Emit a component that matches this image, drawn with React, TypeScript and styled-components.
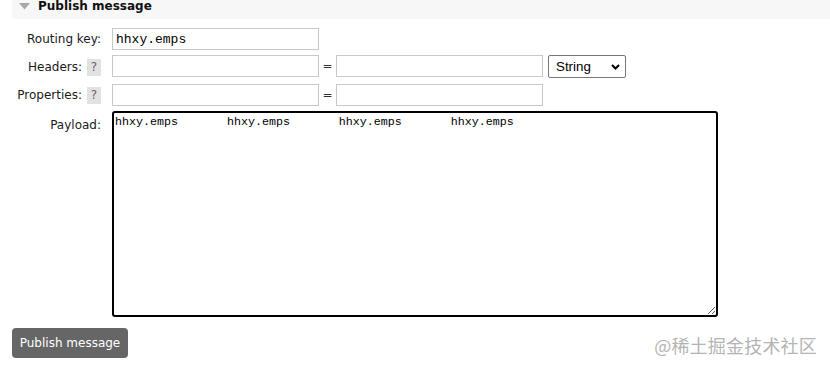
import React from "react";
import styled, { createGlobalStyle } from "styled-components";

const GlobalStyle = createGlobalStyle`
  html, body { margin: 0; padding: 0; background: #fff; }
  body { font-family: "DejaVu Sans", Verdana, sans-serif; font-size: 12px; color: #1a1a1a; }
  * { box-sizing: border-box; }
`;

const Page = styled.div`
  position: relative;
  width: 830px;
  height: 368px;
  overflow: hidden;
`;

const SectionHeader = styled.div`
  margin-left: 12px;
  height: 19px;
  background: #f7f7f7;
  display: flex;
  align-items: center;
  gap: 8px;
  padding: 0 0 6px 7px;
  font-weight: bold;
  font-size: 12px;
  line-height: 13px;
  color: #111;
`;

const Form = styled.div`
  display: grid;
  grid-template-columns: 101px auto;
  column-gap: 11px;
  row-gap: 5px;
  margin-top: 9px;
  justify-content: start;
`;

const Label = styled.div<{ $top?: boolean }>`
  display: flex;
  justify-content: flex-end;
  align-items: ${(p) => (p.$top ? "flex-start" : "center")};
  padding-top: ${(p) => (p.$top ? "7px" : "0")};
  gap: 5px;
  line-height: 14px;
  white-space: nowrap;
`;

const Help = styled.span`
  display: inline-flex;
  align-items: center;
  justify-content: center;
  width: 14px;
  height: 17px;
  background: #e2e2e2;
  color: #666;
  font-size: 12px;
`;

const Field = styled.div<{ $tall?: boolean }>`
  display: flex;
  align-items: flex-start;
  min-height: ${(p) => (p.$tall ? "24px" : "0")};
`;

const TextInput = styled.input`
  width: 207px;
  height: 22px;
  border: 1px solid #c9c9c9;
  padding: 0 3px;
  margin: 0;
  font-family: "Liberation Mono", "Courier New", monospace;
  font-size: 13px;
  color: #000;
  outline: none;
  background: #fff;
`;

const Eq = styled.span`
  width: 17px;
  height: 22px;
  line-height: 22px;
  text-align: center;
  color: #333;
  font-size: 12px;
`;

const SelectWrap = styled.div`
  position: relative;
  margin-left: 5px;
  display: inline-block;
`;

const Select = styled.select`
  appearance: none;
  width: 78px;
  height: 23px;
  border: 1px solid #767676;
  border-radius: 2px;
  background: #fff;
  padding: 0 0 0 7px;
  font-family: "Liberation Sans", Arial, sans-serif;
  font-size: 13.33px;
  color: #000;
  outline: none;
  display: block;
`;

const Chevron = styled.svg`
  position: absolute;
  right: 6px;
  top: 9px;
  pointer-events: none;
`;

const Payload = styled.textarea`
  width: 606px;
  height: 206px;
  border: 2px solid #000;
  border-radius: 3px;
  padding: 2px 1px;
  margin: 0;
  font-family: "Liberation Mono", "Courier New", monospace;
  font-size: 11.67px;
  line-height: 14px;
  tab-size: 8;
  color: #000;
  outline: none;
  resize: both;
  display: block;
`;

const Button = styled.button`
  margin: 11px 0 0 12px;
  width: 116px;
  height: 30px;
  background: #666;
  color: #fff;
  border: none;
  border-radius: 4px;
  font-family: "DejaVu Sans", Verdana, sans-serif;
  font-size: 12px;
  padding: 0;
  display: block;
`;

const Watermark = styled.div`
  position: absolute;
  right: 13px;
  bottom: 12px;
  font-family: "Noto Sans CJK SC", "DejaVu Sans", sans-serif;
  font-size: 18px;
  color: #b4b4b4;
  line-height: 22px;
  letter-spacing: 0.2px;
`;

export default function App() {
  const payload = "hhxy.emps\thhxy.emps\thhxy.emps\thhxy.emps";
  return (
    <Page>
      <GlobalStyle />
      <SectionHeader>
        <svg width="11" height="7" viewBox="0 0 11 7">
          <path d="M0 0 H11 L5.5 6.5 Z" fill="#a8a8a8" />
        </svg>
        Publish message
      </SectionHeader>
      <Form>
        <Label>Routing key:</Label>
        <Field>
          <TextInput defaultValue="hhxy.emps" />
        </Field>

        <Label>
          Headers: <Help>?</Help>
        </Label>
        <Field $tall>
          <TextInput />
          <Eq>=</Eq>
          <TextInput />
          <SelectWrap>
            <Select defaultValue="String">
              <option>String</option>
              <option>Number</option>
              <option>Boolean</option>
              <option>List</option>
            </Select>
            <Chevron width="9" height="6" viewBox="0 0 9 6">
              <path d="M1 1 L4.5 4.5 L8 1" stroke="#000" strokeWidth="2" fill="none" />
            </Chevron>
          </SelectWrap>
        </Field>

        <Label>
          Properties: <Help>?</Help>
        </Label>
        <Field>
          <TextInput />
          <Eq>=</Eq>
          <TextInput />
        </Field>

        <Label $top>Payload:</Label>
        <Field>
          <Payload defaultValue={payload} />
        </Field>
      </Form>
      <Button>Publish message</Button>
      <Watermark>@稀土掘金技术社区</Watermark>
    </Page>
  );
}
